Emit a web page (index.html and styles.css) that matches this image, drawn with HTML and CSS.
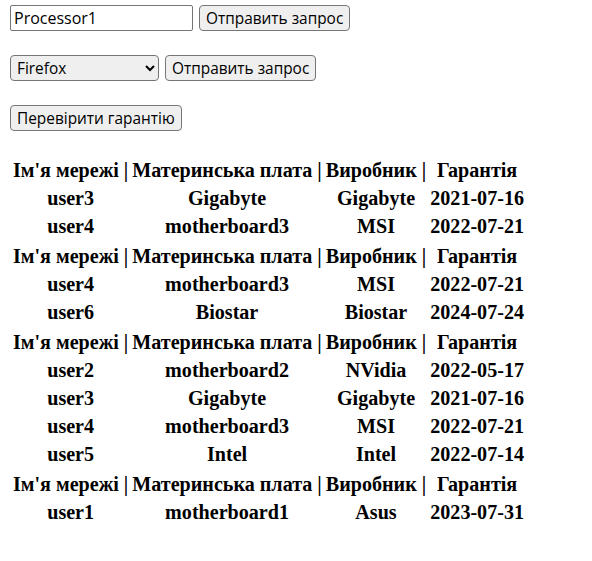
FILE: index.html
```html
<!DOCTYPE html>
<html>
<head>
<meta charset="utf-8">
<link rel="stylesheet" href="styles.css">
</head>
<body>
<div class="forms">
  <form class="row">
    <input class="field" type="text" value="Processor1">
    <button class="btn" type="button">Отправить запрос</button>
  </form>
  <form class="row">
    <select class="select">
      <option>Firefox</option>
    </select>
    <button class="btn" type="button">Отправить запрос</button>
  </form>
  <form class="row">
    <button class="btn" type="button">Перевірити гарантію</button>
  </form>
</div>
<div class="tables">
  <table class="grid">
    <tr><th>Ім'я мережі |</th><th>Материнська плата |</th><th>Виробник |</th><th>Гарантія</th></tr>
    <tr><th>user3</th><th>Gigabyte</th><th>Gigabyte</th><th>2021-07-16</th></tr>
    <tr><th>user4</th><th>motherboard3</th><th>MSI</th><th>2022-07-21</th></tr>
  </table>
  <table class="grid">
    <tr><th>Ім'я мережі |</th><th>Материнська плата |</th><th>Виробник |</th><th>Гарантія</th></tr>
    <tr><th>user4</th><th>motherboard3</th><th>MSI</th><th>2022-07-21</th></tr>
    <tr><th>user6</th><th>Biostar</th><th>Biostar</th><th>2024-07-24</th></tr>
  </table>
  <table class="grid">
    <tr><th>Ім'я мережі |</th><th>Материнська плата |</th><th>Виробник |</th><th>Гарантія</th></tr>
    <tr><th>user2</th><th>motherboard2</th><th>NVidia</th><th>2022-05-17</th></tr>
    <tr><th>user3</th><th>Gigabyte</th><th>Gigabyte</th><th>2021-07-16</th></tr>
    <tr><th>user4</th><th>motherboard3</th><th>MSI</th><th>2022-07-21</th></tr>
    <tr><th>user5</th><th>Intel</th><th>Intel</th><th>2022-07-14</th></tr>
  </table>
  <table class="grid">
    <tr><th>Ім'я мережі |</th><th>Материнська плата |</th><th>Виробник |</th><th>Гарантія</th></tr>
    <tr><th>user1</th><th>motherboard1</th><th>Asus</th><th>2023-07-31</th></tr>
  </table>
</div>
</body>
</html>
```
FILE: styles.css
```css
body {
  margin: 5px 10px;
  font-family: "Liberation Serif", serif;
  background: #fff;
  color: #000;
}
.forms {
  display: flex;
  flex-direction: column;
  gap: 24px;
}
.row {
  display: flex;
  gap: 6px;
  margin: 0;
}
.field, .btn, .select {
  font-family: "Open Sans", "Liberation Sans", sans-serif;
  font-size: 15.4px;
  height: 26px;
  box-sizing: border-box;
  color: #000;
  border: 1px solid #767676;
  margin: 0;
}
.field {
  width: 183px;
  padding: 0 3px;
  border-radius: 2px;
  background: #fff;
  font-size: 16px;
}
.btn {
  background: #efefef;
  border-radius: 4px;
  padding: 0 6px;
}
.select {
  width: 149px;
  background: #efefef;
  border-radius: 4px;
  padding: 0 2px;
}
.tables {
  margin-top: 24px;
}
.grid {
  border-spacing: 2px;
  font-size: 20.1px;
  line-height: 24px;
}
.grid th {
  padding: 1px;
  font-weight: bold;
}
```
